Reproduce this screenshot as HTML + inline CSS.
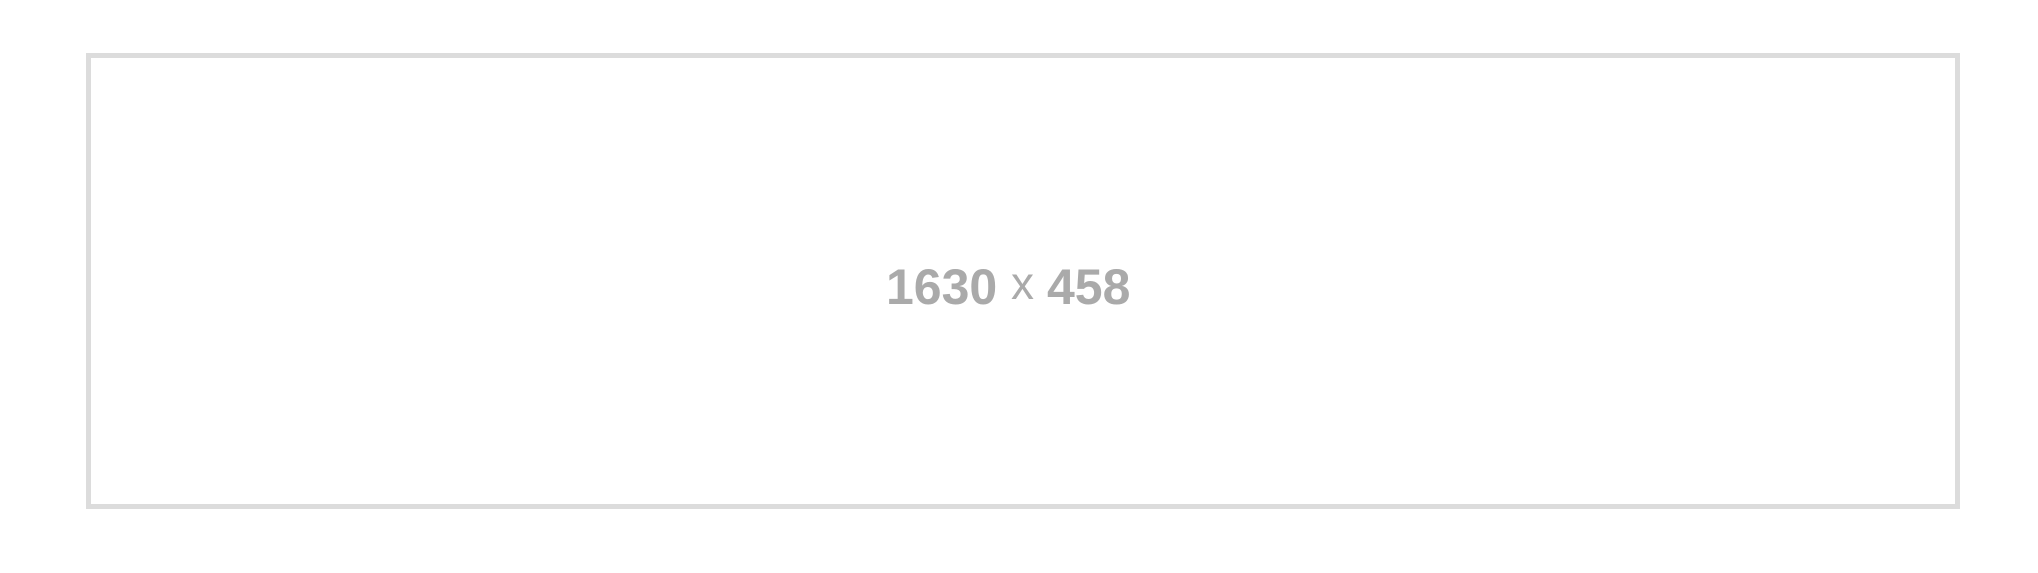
<!DOCTYPE html>
<html><head><style>
html,body{margin:0;padding:0;background:#fff;width:2038px;height:573px;overflow:hidden}
.box{position:absolute;left:86px;top:53px;width:1864px;height:446px;border:5px solid #dcdcdc}
.t{position:absolute;top:262px;font-family:"Liberation Sans",sans-serif;font-weight:bold;font-size:50px;line-height:50px;color:#aaaaaa;white-space:nowrap}
.x{font-weight:normal;font-size:46px;top:258px}
</style></head><body>
<div class="box"></div>
<div class="t" style="left:886px">1630</div>
<div class="t x" style="left:1011px">x</div>
<div class="t" style="left:1047px">458</div>
</body></html>
